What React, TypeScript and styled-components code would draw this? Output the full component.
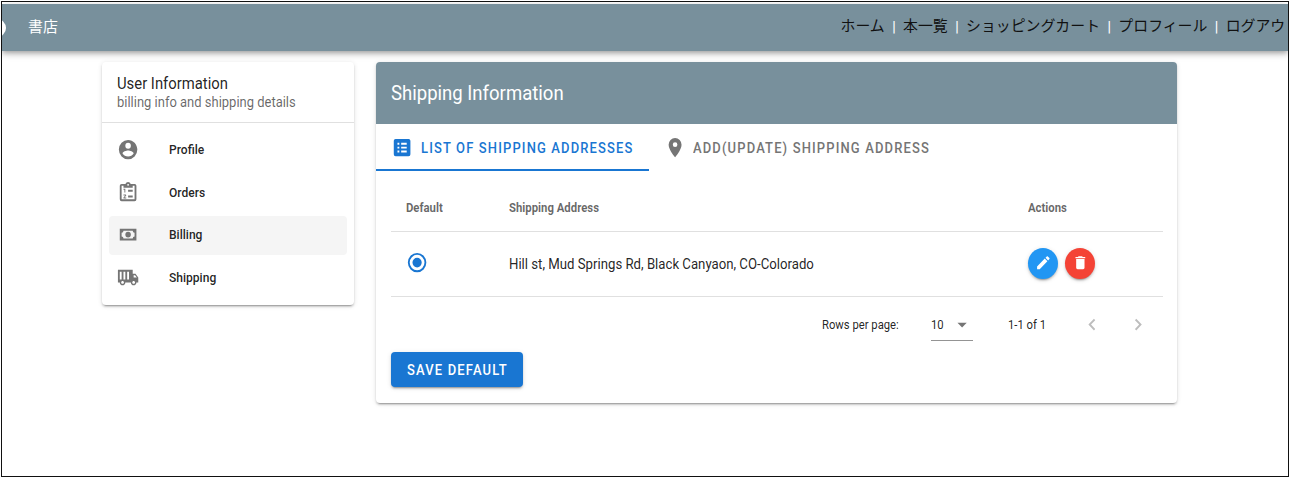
import React from "react";
import styled, { createGlobalStyle, css } from "styled-components";

const GlobalStyle = createGlobalStyle`
  *, *::before, *::after { box-sizing: border-box; }
  body { margin: 0; background: #fff; overflow: hidden; font-family: Roboto, "Noto Sans CJK JP", sans-serif; color: rgba(0,0,0,.87); }
  button { font-family: inherit; border: 0; padding: 0; cursor: pointer; }
`;

const slate = "#78909c";
const blue = "#1976d2";

const Frame = styled.div`
  margin: 1px;
  width: 1288px;
  height: 476px;
  border: 1px solid #111;
  padding-top: 2px;
  overflow: hidden;
  background: #fff;
`;

const AppBar = styled.header`
  height: 47px;
  display: flex;
  align-items: center;
  background: ${slate};
  box-shadow: 0 2px 4px -1px rgba(0,0,0,.2), 0 4px 5px rgba(0,0,0,.14), 0 1px 10px rgba(0,0,0,.12);
  font-size: 14.9px;
  line-height: 22px;
  font-family: "Noto Sans CJK JP", sans-serif;
`;

const Logo = styled.div`
  width: 18px;
  height: 18px;
  margin-left: -14px;
  border-radius: 50%;
  background: #fff;
`;

const Brand = styled.div`
  margin: -4px auto 0 22px;
  color: #fff;
`;

const Nav = styled.nav`
  display: flex;
  width: 447.5px;
  white-space: nowrap;
  margin-top: -3px;
`;

const NavLink = styled.a`
  flex: none;
  color: #111;
`;

const Separator = styled.span`
  flex: none;
  width: 18.3px;
  padding-top: 2px;
  text-align: center;
  font-family: Roboto, sans-serif;
  font-size: 14px;
  font-weight: 500;
  color: #fff;
`;

const Content = styled.main`
  display: grid;
  grid-template-columns: 252px 801px;
  gap: 22px;
  align-items: start;
  padding: 11px 0 0 100.4px;
`;

const Card = styled.section`
  border-radius: 4px;
  background: #fff;
  overflow: hidden;
  box-shadow: 0 3px 1px -2px rgba(0,0,0,.2), 0 2px 2px rgba(0,0,0,.14), 0 1px 5px rgba(0,0,0,.12);
`;

const Text = styled.span<{ $size: number; $sx?: number; $weight?: number; $color?: string; $spacing?: number }>`
  display: inline-block;
  font-size: ${(p) => p.$size}px;
  font-weight: ${(p) => p.$weight ?? 400};
  color: ${(p) => p.$color ?? "rgba(0,0,0,.87)"};
  letter-spacing: ${(p) => p.$spacing ?? 0}px;
  white-space: nowrap;
  transform: scaleX(${(p) => p.$sx ?? 0.927});
  transform-origin: left center;
`;

const UserHead = styled.div`
  display: flex;
  flex-direction: column;
  height: 61px;
  padding: 12px 15px 0;
  line-height: 19px;
  border-bottom: 1px solid #e0e0e0;
`;

const Menu = styled.ul`
  list-style: none;
  margin: 0;
  padding: 8px 7px 7.5px;
  display: grid;
  gap: 4px;
`;

const MenuItem = styled.li<{ $active?: boolean }>`
  display: grid;
  grid-template-columns: 22px 1fr;
  gap: 30px;
  align-items: center;
  height: 38.5px;
  padding: 0 0 1.2px 7.5px;
  border-radius: 4px;
  line-height: 16px;
  background: ${(p) => (p.$active ? "#f5f5f5" : "transparent")};
`;

const Glyph = styled.svg<{ $w?: number; $h?: number }>`
  display: block;
  flex: none;
  width: ${(p) => p.$w ?? 22.2}px;
  height: ${(p) => p.$h ?? 23.2}px;
  fill: currentColor;
`;

const Tone = styled.span<{ $color: string }>`
  display: block;
  color: ${(p) => p.$color};
`;

const CardTitle = styled.div`
  display: flex;
  align-items: center;
  height: 62px;
  padding-left: 15px;
  background: ${slate};
`;

const Tabs = styled.div`
  display: flex;
  height: 46.5px;
`;

const Tab = styled.div<{ $active?: boolean; $width: number }>`
  display: flex;
  align-items: center;
  gap: 7px;
  width: ${(p) => p.$width}px;
  padding: 2.6px 0 0 15px;
  color: ${(p) => (p.$active ? blue : "#757575")};
  border-bottom: 2px solid ${(p) => (p.$active ? blue : "transparent")};
`;

const Body = styled.div`
  padding: 14.5px 14px 16px 15px;
`;

const rowStyle = css`
  display: grid;
  grid-template-columns: 103px 519px 1fr;
  align-items: center;
  border-bottom: 1px solid #e0e0e0;
`;

const HeadRow = styled.div`
  ${rowStyle}
  height: 47px;
  padding: 0 0 3px 15px;
`;

const DataRow = styled.div`
  ${rowStyle}
  height: 65px;
  padding: 0 0 2px 15px;
`;

const Actions = styled.div`
  display: flex;
  gap: 7px;
`;

const RoundButton = styled.button<{ $bg: string }>`
  display: grid;
  place-items: center;
  width: 30px;
  height: 31px;
  border-radius: 50%;
  color: #fff;
  background: ${(p) => p.$bg};
  box-shadow: 0 3px 1px -2px rgba(0,0,0,.2), 0 2px 2px rgba(0,0,0,.14), 0 1px 5px rgba(0,0,0,.12);
`;

const Pager = styled.div`
  display: grid;
  grid-template-columns: 108.5px 42px 35px 73.5px 46px 32px;
  justify-content: end;
  align-items: center;
  height: 55px;
  padding-right: 4px;
  line-height: 16px;
`;

const PageSize = styled.div`
  display: flex;
  justify-content: space-between;
  align-items: center;
  height: 33px;
  padding-top: 1px;
  border-bottom: 1px solid #949494;
  color: #757575;
`;

const SaveButton = styled.button`
  display: block;
  width: 132px;
  height: 35px;
  padding: 1px 0 0 16px;
  text-align: left;
  border-radius: 4px;
  background: ${blue};
  box-shadow: 0 3px 1px -2px rgba(0,0,0,.2), 0 2px 2px rgba(0,0,0,.14), 0 1px 5px rgba(0,0,0,.12);
`;

const paths = {
  account:
    "M12,19.2C9.5,19.2 7.29,17.92 6,16C6.03,14 10,12.9 12,12.9C14,12.9 17.97,14 18,16C16.71,17.92 14.5,19.2 12,19.2M12,5A3,3 0 0,1 15,8A3,3 0 0,1 12,11A3,3 0 0,1 9,8A3,3 0 0,1 12,5M12,2A10,10 0 0,0 2,12A10,10 0 0,0 12,22A10,10 0 0,0 22,12C22,6.47 17.5,2 12,2Z",
  orders:
    "M19,3H14.82C14.4,1.84 13.3,1 12,1C10.7,1 9.6,1.84 9.18,3H5A2,2 0 0,0 3,5V19A2,2 0 0,0 5,21H19A2,2 0 0,0 21,19V5A2,2 0 0,0 19,3M12,3A1,1 0 0,1 13,4A1,1 0 0,1 12,5A1,1 0 0,1 11,4A1,1 0 0,1 12,3M7,7H17V5H19V19H5V5H7V7M12,17V15H17V17H12M12,11V9H17V11H12M8,12V9H7V8H9V12H8M9.25,14A0.75,0.75 0 0,1 10,14.75C10,14.95 9.92,15.14 9.79,15.27L8.12,17H10V18H7V17.08L9,15H7V14H9.25Z",
  cash:
    "M3,6H21V18H3V6M12,9A3,3 0 0,1 15,12A3,3 0 0,1 12,15A3,3 0 0,1 9,12A3,3 0 0,1 12,9M7,8A2,2 0 0,1 5,10V14A2,2 0 0,1 7,16H17A2,2 0 0,1 19,14V10A2,2 0 0,1 17,8H7Z",
  truck:
    "M18 18.5C18.83 18.5 19.5 17.83 19.5 17S18.83 15.5 18 15.5 16.5 16.17 16.5 17 17.17 18.5 18 18.5M6 18.5C6.83 18.5 7.5 17.83 7.5 17S6.83 15.5 6 15.5 4.5 16.17 4.5 17 5.17 18.5 6 18.5M19.5 9.5H18V12H21.46L19.5 9.5M20 8L23 12V17H21C21 18.66 19.66 20 18 20S15 18.66 15 17H9C9 18.66 7.66 20 6 20S3 18.66 3 17H1V4H17V8H20M3 6V14H5V6H3M7 6V14H9V6H7M11 6V14H13V6H11Z",
  list:
    "M5,3H19A2,2 0 0,1 21,5V19A2,2 0 0,1 19,21H5A2,2 0 0,1 3,19V5A2,2 0 0,1 5,3M7,7V9H9V7H7M11,7V9H17V7H11M7,11V13H9V11H7M11,11V13H17V11H11M7,15V17H9V15H7M11,15V17H17V15H11Z",
  pin: "M12,11.5A2.5,2.5 0 0,1 9.5,9A2.5,2.5 0 0,1 12,6.5A2.5,2.5 0 0,1 14.5,9A2.5,2.5 0 0,1 12,11.5M12,2A7,7 0 0,0 5,9C5,14.25 12,22 12,22C12,22 19,14.25 19,9A7,7 0 0,0 12,2Z",
  radio:
    "M12,20A8,8 0 0,1 4,12A8,8 0 0,1 12,4A8,8 0 0,1 20,12A8,8 0 0,1 12,20M12,2A10,10 0 0,0 2,12A10,10 0 0,0 12,22A10,10 0 0,0 22,12A10,10 0 0,0 12,2M12,7A5,5 0 0,0 7,12A5,5 0 0,0 12,17A5,5 0 0,0 17,12A5,5 0 0,0 12,7Z",
  pencil:
    "M20.71,7.04C21.1,6.65 21.1,6 20.71,5.63L18.37,3.29C18,2.9 17.35,2.9 16.96,3.29L15.12,5.12L18.87,8.87M3,17.25V21H6.75L17.81,9.93L14.06,6.18L3,17.25Z",
  trash: "M19,4H15.5L14.5,3H9.5L8.5,4H5V6H19M6,19A2,2 0 0,0 8,21H16A2,2 0 0,0 18,19V7H6V19Z",
  caret: "M7,10L12,15L17,10H7Z",
  left: "M15.41,16.58L10.83,12L15.41,7.41L14,6L8,12L14,18L15.41,16.58Z",
  right: "M8.59,16.58L13.17,12L8.59,7.41L10,6L16,12L10,18L8.59,16.58Z",
};

function Icon({ name, w, h }: { name: keyof typeof paths; w?: number; h?: number }) {
  return (
    <Glyph viewBox="0 0 24 24" preserveAspectRatio="none" $w={w} $h={h} aria-hidden="true">
      <path fillRule="evenodd" d={paths[name]} />
    </Glyph>
  );
}

const navItems = ["ホーム", "本一覧", "ショッピングカート", "プロフィール", "ログアウ"];
const menuItems: { icon: keyof typeof paths; label: string; active?: boolean }[] = [
  { icon: "account", label: "Profile" },
  { icon: "orders", label: "Orders" },
  { icon: "cash", label: "Billing", active: true },
  { icon: "truck", label: "Shipping" },
];
const columns = ["Default", "Shipping Address", "Actions"];

export default function App() {
  return (
    <>
      <GlobalStyle />
      <Frame>
        <AppBar>
          <Logo />
          <Brand>書店</Brand>
          <Nav>
            {navItems.map((item, i) => (
              <React.Fragment key={item}>
                {i > 0 && <Separator>|</Separator>}
                <NavLink>{item}</NavLink>
              </React.Fragment>
            ))}
          </Nav>
        </AppBar>
        <Content>
          <Card>
            <UserHead>
              <Text $size={16}>User Information</Text>
              <Text $size={14} $color="rgba(0,0,0,.6)">billing info and shipping details</Text>
            </UserHead>
            <Menu>
              {menuItems.map((m) => (
                <MenuItem key={m.label} $active={m.active}>
                  <Tone $color="#757575"><Icon name={m.icon} /></Tone>
                  <div><Text $size={13} $weight={500}>{m.label}</Text></div>
                </MenuItem>
              ))}
            </Menu>
          </Card>
          <Card>
            <CardTitle>
              <Text $size={20} $color="#fff">Shipping Information</Text>
            </CardTitle>
            <Tabs>
              <Tab $active $width={272.5}>
                <Icon name="list" />
                <Text $size={14} $weight={500} $color="inherit" $spacing={1.23}>LIST OF SHIPPING ADDRESSES</Text>
              </Tab>
              <Tab $width={300}>
                <Icon name="pin" />
                <Text $size={14} $weight={500} $color="inherit" $spacing={1.23}>ADD(UPDATE) SHIPPING ADDRESS</Text>
              </Tab>
            </Tabs>
            <Body>
              <HeadRow>
                {columns.map((c) => (
                  <div key={c}><Text $size={12} $sx={0.945} $weight={700} $color="rgba(0,0,0,.6)">{c}</Text></div>
                ))}
              </HeadRow>
              <DataRow>
                <Tone $color={blue}><Icon name="radio" /></Tone>
                <div><Text $size={14} $sx={0.942}>Hill st, Mud Springs Rd, Black Canyaon, CO-Colorado</Text></div>
                <Actions>
                  <RoundButton $bg="#2196f3" aria-label="Edit"><Icon name="pencil" w={16.7} h={17.4} /></RoundButton>
                  <RoundButton $bg="#f44336" aria-label="Delete"><Icon name="trash" w={16.7} h={17.4} /></RoundButton>
                </Actions>
              </DataRow>
              <Pager>
                <Text $size={12} $sx={0.938}>Rows per page:</Text>
                <PageSize>
                  <Text $size={12} $sx={0.938}>10</Text>
                  <Icon name="caret" />
                </PageSize>
                <span />
                <Text $size={12} $sx={0.938}>1-1 of 1</Text>
                <Tone $color="#bdbdbd"><Icon name="left" /></Tone>
                <Tone $color="#bdbdbd"><Icon name="right" /></Tone>
              </Pager>
              <SaveButton>
                <Text $size={14} $weight={500} $color="#fff" $spacing={1.25}>SAVE DEFAULT</Text>
              </SaveButton>
            </Body>
          </Card>
        </Content>
      </Frame>
    </>
  );
}
